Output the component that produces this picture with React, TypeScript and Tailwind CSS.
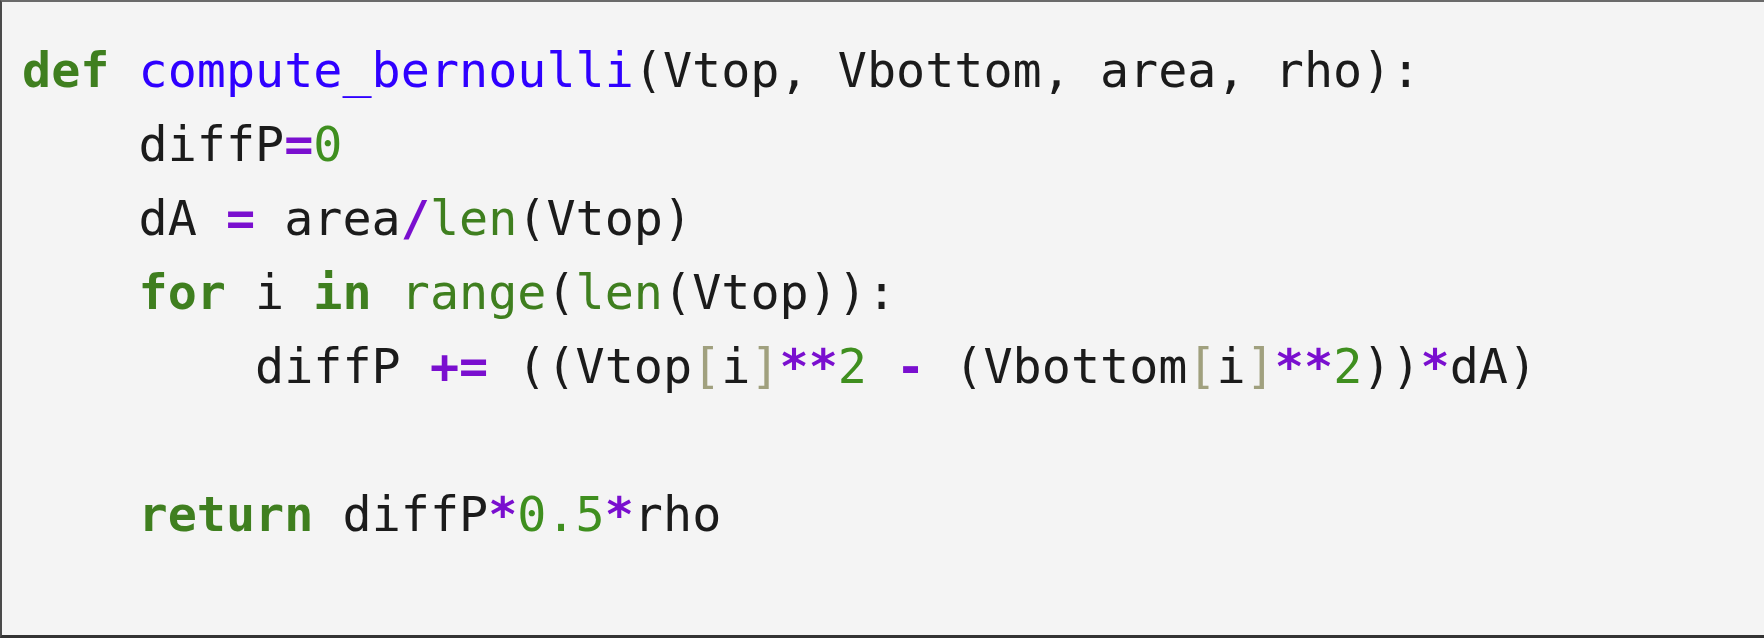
import React from "react";

type Tok = [string, string?];

const kw = "text-[#3f7f1f] font-bold";
const bi = "text-[#3f7f1f]";
const fn = "text-[#2f00ff]";
const op = "text-[#7a0fcf] font-bold";
const num = "text-[#3f8f1f]";
const br = "text-[#a0a07e]";

const lines: Tok[][] = [
  [["def", kw], [" "], ["compute_bernoulli", fn], ["(Vtop, Vbottom, area, rho):"]],
  [["    diffP"], ["=", op], ["0", num]],
  [["    dA "], ["=", op], [" area"], ["/", op], ["len", bi], ["(Vtop)"]],
  [["    "], ["for", kw], [" i "], ["in", kw], [" "], ["range", bi], ["("], ["len", bi], ["(Vtop)):"]],
  [
    ["        diffP "],
    ["+=", op],
    [" ((Vtop"],
    ["[", br],
    ["i"],
    ["]", br],
    ["**", op],
    ["2", num],
    [" "],
    ["-", op],
    [" (Vbottom"],
    ["[", br],
    ["i"],
    ["]", br],
    ["**", op],
    ["2", num],
    ["))"],
    ["*", op],
    ["dA)"],
  ],
  [[" "]],
  [["    "], ["return", kw], [" diffP"], ["*", op], ["0.5", num], ["*", op], ["rho"]],
];

const CodeLine = ({ tokens }: { tokens: Tok[] }) => (
  <div className="h-[74px] leading-[74px] whitespace-pre">
    {tokens.map(([text, cls], i) => (
      <span key={i} className={cls ?? ""}>
        {text}
      </span>
    ))}
  </div>
);

const App = () => {
  return (
    <div className="h-[638px] w-[1764px] box-border bg-[#f4f4f4] border-t-2 border-l-2 border-b-[3px] border-t-[#6a6a6a] border-l-[#4a4a4a] border-b-[#333333] pt-[31px] pl-[20px] text-[#1b1b1b] font-['DejaVu_Sans_Mono',monospace] text-[48.4px] overflow-hidden">
      {lines.map((tokens, i) => (
        <CodeLine key={i} tokens={tokens} />
      ))}
    </div>
  );
};

export default App;
